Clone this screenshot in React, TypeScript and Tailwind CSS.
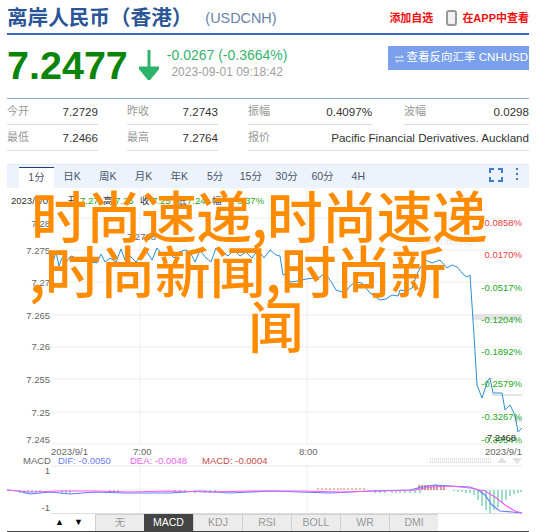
const sans = { fontFamily: '"Liberation Sans", "Noto Sans CJK SC", sans-serif' };

const periods = ["1分", "日K", "周K", "月K", "年K", "5分", "15分", "30分", "60分", "4H"];
const indicators = ["无", "MACD", "KDJ", "RSI", "BOLL", "WR", "DMI"];
const gridY = [218, 250, 282, 315, 347, 379, 412, 444];
const leftLabels: [string, number][] = [["7.28", 226.5], ["7.275", 253.5], ["7.27", 285.5], ["7.265", 318.5], ["7.26", 350], ["7.255", 382.5], ["7.25", 415.5], ["7.245", 442.5]];
const upLabels: [string, number][] = [["0.0858%", 226], ["0.0170%", 257.5]];
const downLabels: [string, number][] = [["-0.0517%", 290.5], ["-0.1204%", 322.5], ["-0.1892%", 355], ["-0.2579%", 387], ["-0.3267%", 420], ["-0.3954%", 442.5]];
const infoLine: [string, number, string][] = [["2023/9/01", 11, "#333333"], ["开", 68, "#333333"], ["7.27", 80, "#22a822"], ["高", 103, "#333333"], ["7.25", 115, "#22a822"], ["收", 140, "#333333"], ["7.25", 152, "#22a822"], ["低", 177, "#333333"], ["7.24", 187, "#22a822"], ["幅", 212, "#333333"], ["-0.37%", 234, "#22a822"]];

const price = "53,262 56,252 59,266 62,258 66,262 71,256 76,258 81,262 86,257 92,262 97,263 101,254 105,262 110,258 116,262 121,249 125,260 130,256 136,262 141,256 147,252 152,260 157,248 163,256 168,252 174,258 179,252 185,250 190,252 195,262 200,250 206,258 211,262 216,248 222,252 228,256 234,250 240,256 246,252 252,258 258,250 264,258 270,250 276,255 280,256 283,275 286,274 290,282 298,281 306,279 314,278 320,277 325,273 332,283 336,290 345,293 350,286 355,282 362,283 370,293 380,300 386,299 392,295 398,296 400,290 406,291 412,288 418,272 425,260 432,263 440,260 447,268 452,265 457,267 463,274 467,277 470,275 474,335 477,385 482,398 488,380 490,378 493,393 502,393 505,410 510,405 515,415 518,432 522,428";
const dif = "7,490 18,491 30,494 50,492 70,494 95,492 125,493 170,493 200,491 230,493 270,491 300,492 330,493 370,491 410,490 422,487 435,485 450,486 470,487 478,490 485,495 492,505 500,511 512,512 522,513";
const dea = "7,490 30,492 60,491 95,491 130,492 170,491 210,492 250,491 300,491 340,492 380,491 415,490 430,487 450,486 470,488 485,491 495,497 505,505 515,511 522,513";
const downBars = [20, 24, 28, 32, 36, 40, 62, 66, 70, 110, 114, 118, 175, 180, 185, 195, 205, 210, 215, 375, 380, 385, 392, 396, 400, 405, 410, 415, 420];
const upBars = [318, 322, 326, 330, 334, 338, 341, 344, 348, 352, 356, 360, 364];

function PriceChart() {
  return (
    <svg viewBox="7 188 522 326" className="block h-[326px] w-[522px]" style={sans}>
      {gridY.map((y) => (
        <line key={y} x1="51" x2="522" y1={y} y2={y} stroke="#eeeeee" />
      ))}
      <line x1="140" x2="140" y1="188" y2="444" stroke="#eeeeee" />
      <line x1="307" x2="307" y1="188" y2="444" stroke="#eeeeee" />
      <line x1="140" x2="140" y1="466" y2="514" stroke="#eeeeee" />
      <line x1="307" x2="307" y1="466" y2="514" stroke="#eeeeee" />
      <line x1="51" x2="522" y1="466" y2="466" stroke="#e8e8e8" />
      <line x1="51" x2="522" y1="490" y2="490" stroke="#eeeeee" />
      <line x1="51" x2="522" y1="513.5" y2="513.5" stroke="#dddddd" />

      <rect x="473" y="314" width="49" height="6" fill="#e4e4e4" />
      <rect x="492" y="394" width="30" height="2" fill="#e4e4e4" />
      <rect x="514" y="418" width="8" height="4" fill="#e4e4e4" />

      <text x="415" y="244" fontSize="10" fill="#e6e6e6">sina新浪财经</text>
      <polyline points={price} fill="none" stroke="#2a8ed6" strokeWidth="1" />

      <g fontSize="9.5" fill="#666666" textAnchor="end">
        {leftLabels.map(([t, y]) => (
          <text key={t} x="50" y={y}>{t}</text>
        ))}
        <text x="156" y="240">7.2768</text>
      </g>
      <g fontSize="9.5" textAnchor="end">
        {upLabels.map(([t, y]) => (
          <text key={t} x="522" y={y} fill="#f04040">{t}</text>
        ))}
        {downLabels.map(([t, y]) => (
          <text key={t} x="522" y={y} fill="#22a822">{t}</text>
        ))}
        <text x="516" y="441" fill="#333333">7.2468</text>
      </g>

      <g fontSize="9.5">
        {infoLine.map(([t, x, c]) => (
          <text key={x} x={x} y="204" fill={c}>{t}</text>
        ))}
      </g>

      <g fontSize="9.5" fill="#666666">
        <text x="51" y="454.5">2023/9/1</text>
        <text x="133" y="454.5">7:00</text>
        <text x="299" y="454.5">8:00</text>
        <text x="522" y="454.5" textAnchor="end">2023/9/1</text>
      </g>

      <g fontSize="9.5">
        <text x="23" y="463.5" fill="#666666">MACD</text>
        <text x="58" y="463.5" fill="#6a7cff">DIF: -0.0050</text>
        <text x="130" y="463.5" fill="#f060f0">DEA: -0.0048</text>
        <text x="202" y="463.5" fill="#c84848">MACD: -0.0004</text>
        <text x="50" y="474" fill="#666666" textAnchor="end">1</text>
        <text x="50" y="511" fill="#666666" textAnchor="end">-1</text>
      </g>
      <g stroke="#bbbbbb" strokeWidth="1" strokeDasharray="1 1">
        <line x1="430" x2="492" y1="459" y2="459" />
        <line x1="430" x2="492" y1="462" y2="462" />
      </g>
      <polygon points="497,463 507,463 502,457" fill="#e2e2e2" />
      <polygon points="512,458 522,458 517,464" fill="#e2e2e2" />

      {downBars.map((x) => (
        <line key={x} x1={x} x2={x} y1="490" y2="493" stroke="#3cc08a" />
      ))}
      {upBars.map((x) => (
        <line key={x} x1={x} x2={x} y1="490" y2="488" stroke="#e07a60" />
      ))}
      {[419, 422, 425, 428, 431, 434, 437, 441, 444].map((x) => (
        <line key={x} x1={x} x2={x} y1="490" y2="485" stroke="#b03020" />
      ))}
      {[454, 458, 462, 466, 470, 474, 478, 482, 486, 490, 494, 498, 502, 506, 510, 514, 518, 521].map((x, i) => {
        const h = [1, 2, 2, 3, 3, 5, 10, 16, 20, 23, 20, 17, 13, 10, 6, 4, 3, 2][i];
        return <line key={x} x1={x} x2={x} y1="490" y2={490 + h} stroke="#3cc08a" />;
      })}
      <polyline points={dif} fill="none" stroke="#6a7cff" strokeWidth="1.2" />
      <polyline points={dea} fill="none" stroke="#f060f0" strokeWidth="1.2" />
    </svg>
  );
}

function Stat({ label, value, className }: { label: string; value: string; className: string }) {
  return (
    <div className={`flex h-[26px] items-center justify-between border-b border-[#dddddd] ${className}`}>
      <span className="text-[11px] text-[#999999]">{label}</span>
      <span className="text-[11.6px] text-[#333333]">{value}</span>
    </div>
  );
}

export default function App() {
  return (
    <div className="relative h-[532px] w-[550px] overflow-hidden bg-white" style={sans}>
      <div className="ml-[7px] w-[522px]">
        {/* Title */}
        <div className="flex h-[35px] items-center border-b-[2px] border-[#3b66c6]">
          <span className="mt-[3px] whitespace-nowrap text-[20.6px] font-bold leading-none text-[#2a5597]">离岸人民币（香港）</span>
          <span className="ml-[13px] mt-[4px] text-[14.4px] text-[#6a83a8]">(USDCNH)</span>
          <span className="ml-auto mt-[3px] text-[11px] font-bold text-[#f00f0f]">添加自选</span>
          <svg width="11" height="16" viewBox="0 0 11 16" className="ml-[13px] mt-[3px]">
            <rect x="1" y="1" width="9" height="14" rx="2" fill="#f2f2f2" stroke="#999999" strokeWidth="2" />
          </svg>
          <span className="ml-[5px] mt-[3px] text-[11px] font-bold text-[#f00f0f]">在APP中查看</span>
        </div>

        {/* Price */}
        <div className="flex h-[64px] items-start border-b border-[#8db0e2]">
          <span className="mt-[7px] text-[39.5px] font-bold leading-[46px] text-[#0a840a]">7.2477</span>
          <svg width="20" height="30" viewBox="0 0 20 30" className="ml-[11px] mt-[15px]">
            <path d="M10 0 V24 M1 18 H19 L10 29 Z" fill="#2eb36a" stroke="#2eb36a" strokeWidth="3" />
          </svg>
          <div className="ml-[8px] mt-[10px] flex flex-col items-center">
            <span className="text-[14px] leading-[20px] text-[#35b36e]">-0.0267 (-0.3664%)</span>
            <span className="text-[12px] leading-[15px] text-[#a0a0a0]">2023-09-01 09:18:42</span>
          </div>
          <div className="ml-auto mt-[11px] flex h-[24px] w-[141px] items-center justify-end whitespace-nowrap bg-[#7a9fec] pr-[1px] text-[11.5px] text-white">
            <svg width="11" height="12" viewBox="0 0 12 12" className="mr-[2px] mt-[2px]">
              <path d="M1 4 H10 L8 2 M11 8 H2 L4 10" fill="none" stroke="white" strokeWidth="1" />
            </svg>
            查看反向汇率 CNHUSD
          </div>
        </div>

        {/* Stats */}
        <div className="flex h-[26px]">
          <Stat label="今开" value="7.2729" className="ml-0 w-[91px]" />
          <Stat label="昨收" value="7.2743" className="ml-[29px] w-[91px]" />
          <Stat label="振幅" value="0.4097%" className="ml-[30px] w-[124px]" />
          <Stat label="波幅" value="0.0298" className="ml-[32px] w-[125px]" />
        </div>
        <div className="flex h-[26px]">
          <Stat label="最低" value="7.2466" className="w-[91px]" />
          <Stat label="最高" value="7.2764" className="ml-[29px] w-[91px]" />
          <Stat label="报价" value="Pacific Financial Derivatives. Auckland" className="ml-[30px] w-[281px]" />
        </div>

        {/* Period tabs */}
        <div className="mt-[13px] flex h-[24px] items-stretch border-t border-[#dfe8f4] bg-[#edf3fc] text-[10.5px] text-[#4a5568]">
          <div className="ml-[12px] mt-[2px] flex w-[35px] items-center justify-center border-t-[1px] border-[#1f3f7a] bg-white">1分</div>
          {periods.slice(1).map((p) => (
            <div key={p} className="flex w-[35.8px] items-center justify-center">{p}</div>
          ))}
          <svg width="14" height="14" viewBox="0 0 14 14" className="ml-auto mr-[13px] mt-[3px]">
            <path d="M1 5 V1 H5 M9 1 H13 V5 M13 9 V13 H9 M5 13 H1 V9" fill="none" stroke="#3f7ccf" strokeWidth="2" />
          </svg>
          <div className="mr-[11px] mt-[3px] flex h-[12px] flex-col justify-between">
            <span className="h-[2px] w-[2px] bg-[#3f7ccf]" />
            <span className="h-[2px] w-[2px] bg-[#3f7ccf]" />
            <span className="h-[2px] w-[2px] bg-[#3f7ccf]" />
          </div>
        </div>

        <PriceChart />

        {/* Indicator tabs */}
        <div className="flex h-[18px] border-b-[1px] border-[#444444] pl-[44px] text-[10.5px]">
          <div className="flex w-[17px] items-center justify-center text-[9px] text-black">▲</div>
          <div className="ml-[2px] flex w-[17px] items-center justify-center text-[9px] text-black">▼</div>
          <div className="ml-[8px] flex">
            {indicators.map((name) =>
              name === "MACD" ? (
                <div key={name} className="flex w-[49px] items-center justify-center bg-[#444444] text-white">{name}</div>
              ) : (
                <div key={name} className="flex w-[49px] items-center justify-center border-l border-t border-[#d0d0d0] bg-[#ececec] text-[#999999]">{name}</div>
              ),
            )}
          </div>
        </div>
      </div>

      {/* Headline over the chart */}
      <div className="absolute left-0 top-[186px] text-[56px] font-medium leading-[55px] tracking-[-1px] text-[#ff8c00]" style={{ fontFamily: '"Noto Sans CJK SC", sans-serif' }}>
        <div className="ml-[31px] whitespace-nowrap">时尚速递,时尚速递</div>
        <div className="ml-[29px] whitespace-nowrap">,时尚新闻,时尚新</div>
        <div className="ml-[248px]">闻</div>
      </div>
    </div>
  );
}
